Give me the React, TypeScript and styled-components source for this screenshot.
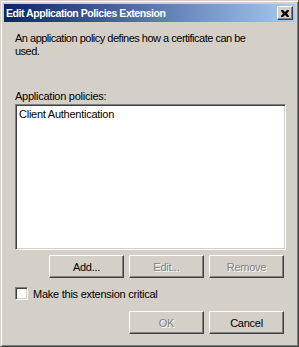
import React from 'react';
import styled, {createGlobalStyle} from 'styled-components';

const GlobalStyle = createGlobalStyle`
  html, body {
    margin: 0;
    padding: 0;
    background: #d4d0c8;
  }
  body {
    font-family: Tahoma, "Liberation Sans", Arial, sans-serif;
    font-size: 11px;
    letter-spacing: -0.25px;
  }
`;

const Window = styled.div`
  box-sizing: border-box;
  width: 299px;
  height: 347px;
  background: #d4d0c8;
  border-top: 1px solid #d4d0c8;
  border-left: 1px solid #d4d0c8;
  border-right: 1px solid #404040;
  border-bottom: 1px solid #404040;
  box-shadow: inset 1px 1px 0 #ffffff, inset -1px -1px 0 #808080;
  padding: 3px;
  display: flex;
  flex-direction: column;
`;

const TitleBar = styled.div`
  height: 18px;
  background: linear-gradient(to right, #0a246a, #a6caf0);
  display: flex;
  align-items: center;
  justify-content: space-between;
  padding: 0 2px 0 2px;
`;

const Title = styled.span`
  color: #ffffff;
  font-weight: bold;
  font-size: 10.5px;
  letter-spacing: -0.45px;
`;

const CloseButton = styled.div`
  box-sizing: border-box;
  width: 16px;
  height: 14px;
  background: #d4d0c8;
  border-top: 1px solid #ffffff;
  border-left: 1px solid #ffffff;
  border-right: 1px solid #404040;
  border-bottom: 1px solid #404040;
  box-shadow: inset -1px -1px 0 #808080;
  display: flex;
  align-items: center;
  justify-content: center;
`;

const Body = styled.div`
  flex: 1;
  display: flex;
  flex-direction: column;
  padding: 10px 9px 0 11px;
  color: #000000;
`;

const Description = styled.p`
  margin: 0;
  line-height: 13px;
  width: 245px;
  letter-spacing: -0.5px;
`;

const FieldLabel = styled.div`
  margin-top: 32px;
  line-height: 13px;
`;

const ListBox = styled.div`
  box-sizing: border-box;
  margin-top: 1px;
  height: 146px;
  background: #ffffff;
  border-top: 1px solid #808080;
  border-left: 1px solid #808080;
  border-right: 1px solid #ffffff;
  border-bottom: 1px solid #ffffff;
  box-shadow: inset 1px 1px 0 #404040, inset -1px -1px 0 #d4d0c8;
  padding: 3px 3px;
`;

const ListItem = styled.div`
  line-height: 13px;
`;

const ButtonRow = styled.div<{ $top: number }>`
  display: flex;
  justify-content: flex-end;
  gap: 5px;
  padding-right: 2px;
  margin-top: ${p => p.$top}px;
`;

const Button = styled.div<{ $disabled?: boolean }>`
  box-sizing: border-box;
  width: 75px;
  height: 23px;
  background: #d4d0c8;
  border-top: 1px solid #ffffff;
  border-left: 1px solid #ffffff;
  border-right: 1px solid #404040;
  border-bottom: 1px solid #404040;
  box-shadow: inset -1px -1px 0 #808080;
  display: flex;
  align-items: center;
  justify-content: center;
  color: ${p => (p.$disabled ? '#808080' : '#000000')};
  text-shadow: ${p => (p.$disabled ? '1px 1px 0 #ffffff' : 'none')};
`;

const CheckRow = styled.label`
  display: flex;
  align-items: center;
  gap: 5px;
  margin-top: 9px;
`;

const CheckBox = styled.span`
  box-sizing: border-box;
  width: 13px;
  height: 13px;
  background: #ffffff;
  border-top: 1px solid #808080;
  border-left: 1px solid #808080;
  border-right: 1px solid #ffffff;
  border-bottom: 1px solid #ffffff;
  box-shadow: inset 1px 1px 0 #404040, inset -1px -1px 0 #d4d0c8;
`;

export default function App() {
    return (
        <>
            <GlobalStyle/>
            <Window>
                <TitleBar>
                    <Title>Edit Application Policies Extension</Title>
                    <CloseButton>
                        <svg width="8" height="7" viewBox="0 0 8 7">
                            <path d="M0 0h2l2 2 2-2h2v1l-2 2.5 2 2.5v1h-2l-2-2-2 2h-2v-1l2-2.5-2-2.5z" fill="#000"/>
                        </svg>
                    </CloseButton>
                </TitleBar>
                <Body>
                    <Description>
                        An application policy defines how a certificate can be used.
                    </Description>
                    <FieldLabel>Application policies:</FieldLabel>
                    <ListBox>
                        <ListItem>Client Authentication</ListItem>
                    </ListBox>
                    <ButtonRow $top={5}>
                        <Button>Add...</Button>
                        <Button $disabled>Edit...</Button>
                        <Button $disabled>Remove</Button>
                    </ButtonRow>
                    <CheckRow>
                        <CheckBox/>
                        <span>Make this extension critical</span>
                    </CheckRow>
                    <ButtonRow $top={11}>
                        <Button $disabled>OK</Button>
                        <Button>Cancel</Button>
                    </ButtonRow>
                </Body>
            </Window>
        </>
    );
}
